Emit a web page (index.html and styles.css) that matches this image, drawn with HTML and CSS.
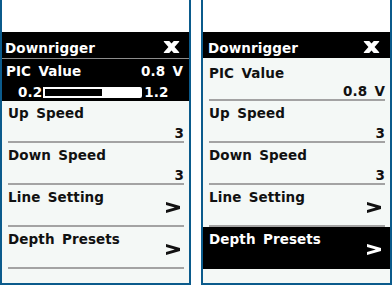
FILE: index.html
```html
<!DOCTYPE html>
<html lang="en">
<head>
  <meta charset="UTF-8" />
  <title>Downrigger</title>
  <link rel="stylesheet" href="styles.css">
</head>
<body>
  <div class="screens">
    <!-- expanded PIC value -->
    <div class="panel">
      <div class="top"></div>
      <div class="pic-box">
        <div class="header header-left">
          <span>Downrigger</span>
          <svg class="close" viewBox="0 0 17 12" width="17" height="12"><path d="M2.3 -1 L14.7 13 M14.7 -1 L2.3 13" stroke="currentColor" stroke-width="4.6" fill="none"/></svg>
        </div>
        <div class="pic-line">
          <span>PIC Value</span>
          <span>0.8 V</span>
        </div>
        <div class="range">
          <span>0.2</span>
          <div class="bar"><div class="fill" style="width:60%"></div></div>
          <span class="range-max">1.2</span>
        </div>
      </div>
      <div class="row"><div class="item"><span>Up Speed</span><span class="val">3</span></div></div>
      <div class="row"><div class="item"><span>Down Speed</span><span class="val">3</span></div></div>
      <div class="row"><div class="item item-nav"><span>Line Setting</span>
        <svg class="chev" viewBox="0 0 14 11" width="14" height="11"><polygon points="0,0 14,4 14,7 0,11 0,7.9 8.8,5.5 0,3.1" fill="currentColor"/></svg></div></div>
      <div class="row"><div class="item item-nav"><span>Depth Presets</span>
        <svg class="chev" viewBox="0 0 14 11" width="14" height="11"><polygon points="0,0 14,4 14,7 0,11 0,7.9 8.8,5.5 0,3.1" fill="currentColor"/></svg></div></div>
    </div>

    <!-- Depth Presets selected -->
    <div class="panel">
      <div class="top"></div>
      <div class="header header-right">
        <span>Downrigger</span>
        <svg class="close" viewBox="0 0 17 12" width="17" height="12"><path d="M2.3 -1 L14.7 13 M14.7 -1 L2.3 13" stroke="currentColor" stroke-width="4.6" fill="none"/></svg>
      </div>
      <div class="row"><div class="item item-pic"><span>PIC Value</span><span class="val">0.8 V</span></div></div>
      <div class="row"><div class="item"><span>Up Speed</span><span class="val">3</span></div></div>
      <div class="row"><div class="item"><span>Down Speed</span><span class="val">3</span></div></div>
      <div class="row"><div class="item item-nav"><span>Line Setting</span>
        <svg class="chev" viewBox="0 0 14 11" width="14" height="11"><polygon points="0,0 14,4 14,7 0,11 0,7.9 8.8,5.5 0,3.1" fill="currentColor"/></svg></div></div>
      <div class="row selected"><div class="item item-nav"><span>Depth Presets</span>
        <svg class="chev" viewBox="0 0 14 11" width="14" height="11"><polygon points="0,0 14,4 14,7 0,11 0,7.9 8.8,5.5 0,3.1" fill="currentColor"/></svg></div></div>
    </div>
  </div>
</body>
</html>
```

FILE: styles.css
```css
body {
  margin: 0;
  background: #fff;
  font-family: "DejaVu Sans", sans-serif;
  font-weight: bold;
  font-size: 13.5px;
  line-height: 16px;
  letter-spacing: 0.1px;
  word-spacing: 2.5px;
  color: #111;
}
.screens {
  display: flex;
  gap: 10px;
}
.panel {
  width: 191px;
  height: 285px;
  box-sizing: border-box;
  border: 2px solid #0b5b8c;
  border-top: 0;
  background: #f4f8f6;
}
.top {
  height: 32px;
  background: #fff;
}
.header {
  height: 26px;
  box-sizing: border-box;
  display: flex;
  justify-content: space-between;
  align-items: flex-start;
  padding-top: 8px;
  background: #000;
  color: #fff;
}
.header-left {
  padding-left: 3px;
  padding-right: 9px;
  height: 27px;
  border-bottom: 1px solid #8c8c8c;
}
.header-right {
  padding-left: 5px;
  padding-right: 10px;
}
.close {
  margin-top: 1px;
  display: block;
}
.pic-box {
  background: #000;
  color: #fff;
  padding-bottom: 1px;
}
.pic-line {
  display: flex;
  justify-content: space-between;
  padding: 4px 6px 0 4px;
}
.range {
  display: flex;
  align-items: center;
  margin-top: 5px;
  padding-left: 16px;
}
.bar {
  width: 99px;
  height: 11px;
  box-sizing: border-box;
  margin-left: 1px;
  border: 2px solid #fff;
  border-radius: 0 2px 2px 0;
  background: #fff;
}
.fill {
  height: 100%;
  background: #000;
}
.range-max {
  margin-left: 2px;
}
.item {
  height: 42px;
  box-sizing: border-box;
  margin: 0 5px 0 6px;
  padding-top: 4px;
  border-bottom: 2px solid #a3a3a3;
  display: flex;
  flex-direction: column;
}
.val {
  align-self: flex-end;
  margin-top: 4px;
}
.item-pic {
  height: 43px;
  padding-top: 7px;
}
.item-pic .val {
  margin-top: 2px;
}
.item-nav {
  flex-direction: row;
  justify-content: space-between;
}
.chev {
  align-self: center;
  margin-right: 4px;
  display: block;
}
.selected {
  background: #000;
  color: #fff;
}
.selected .item {
  border-bottom-color: #000;
}
```
